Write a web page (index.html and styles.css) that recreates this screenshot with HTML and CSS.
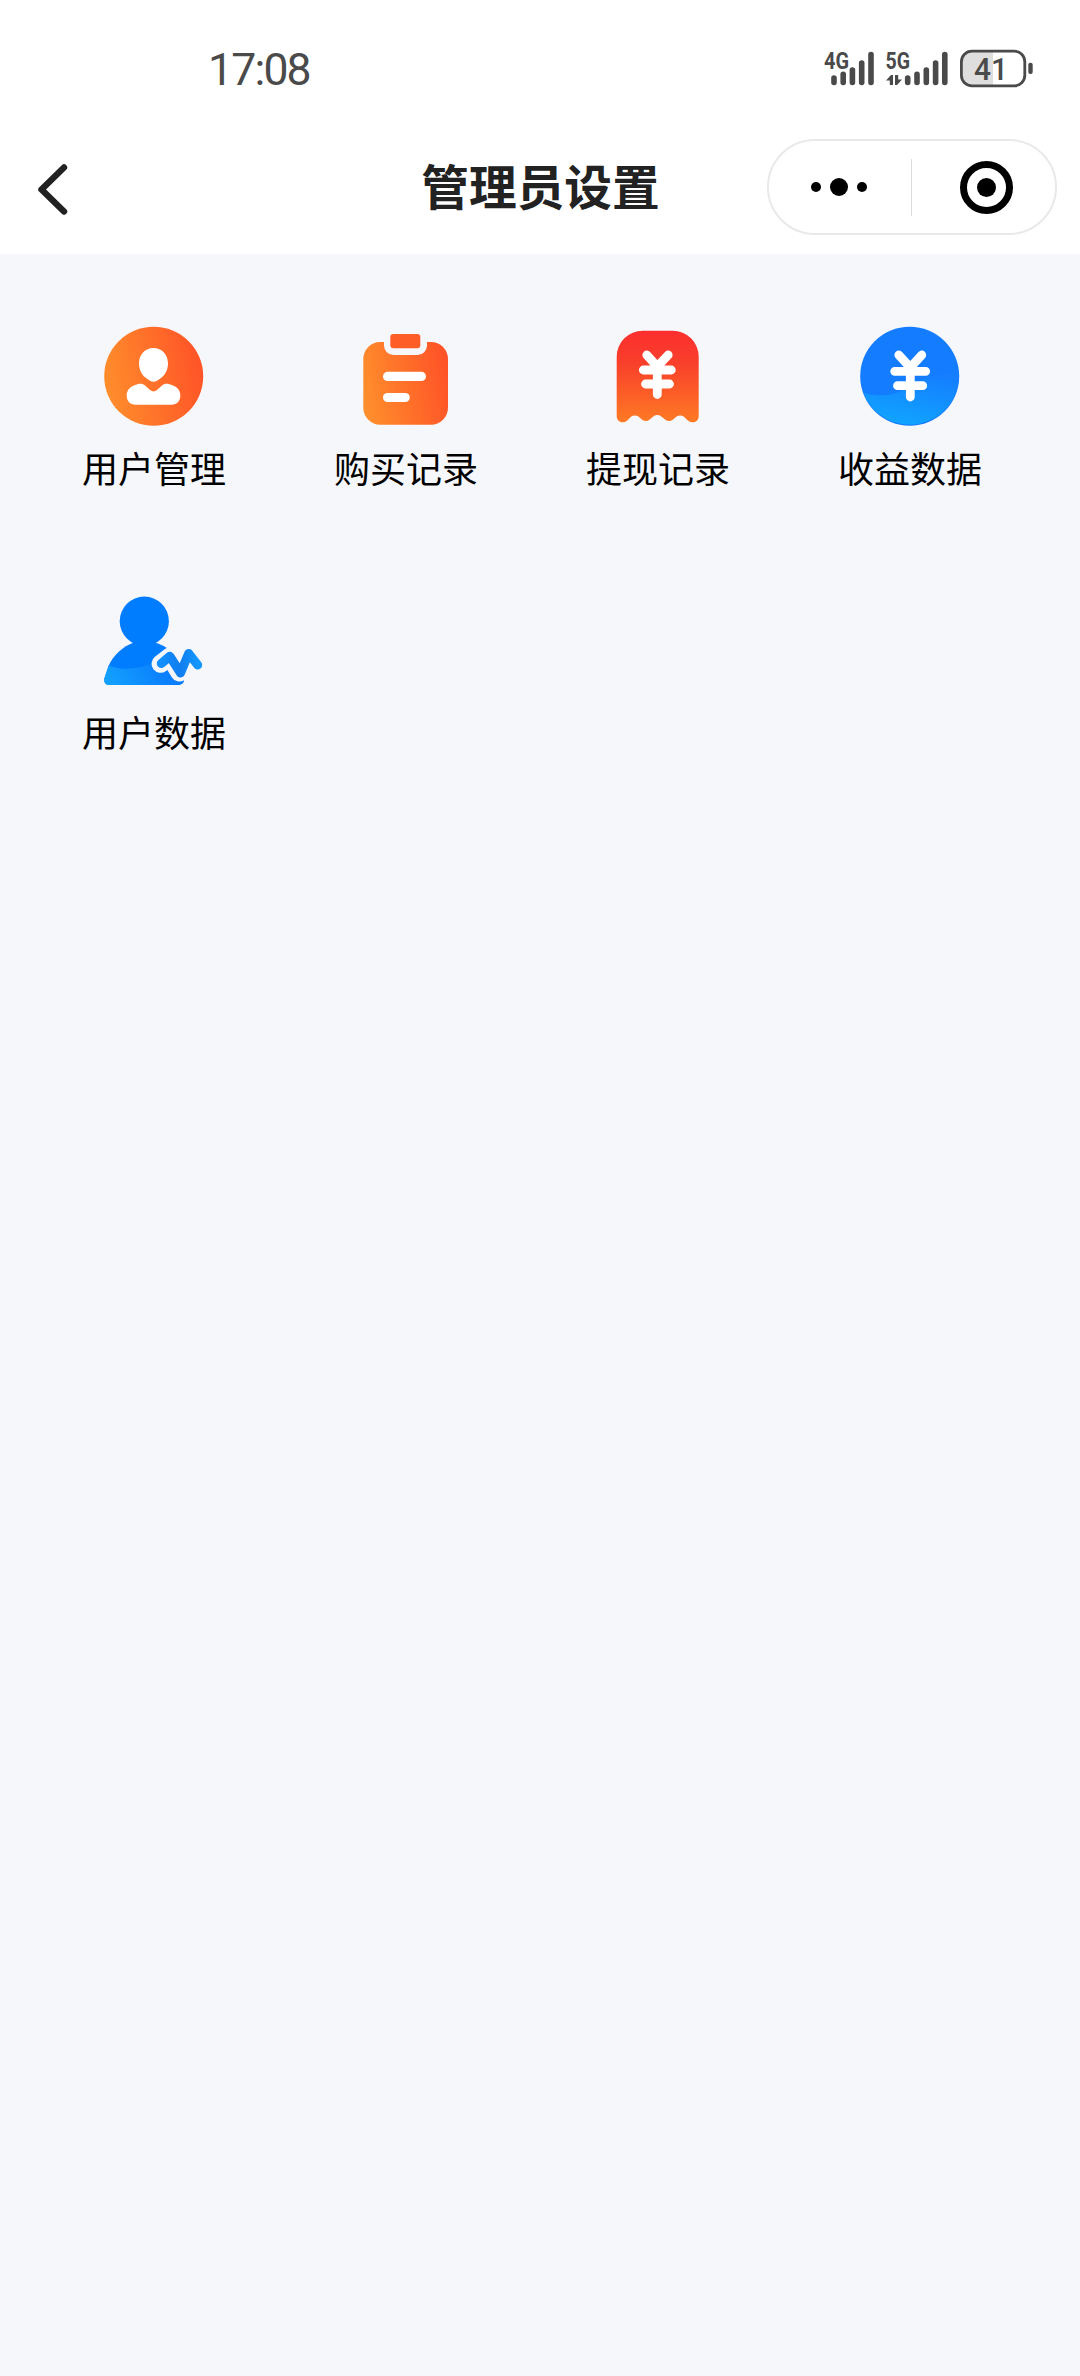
FILE: index.html
```html
<!DOCTYPE html>
<html lang="zh-CN">
<head>
    <meta charset="UTF-8">
    <meta name="viewport" content="width=device-width, initial-scale=1.0">
    <title>管理员设置</title>
    <link rel="stylesheet" href="styles.css">
</head>
<body>
    <header>
        <div class="status-bar">
            <span class="time">17:08</span>
            <svg class="status-icons" viewBox="0 0 216 46">
                <!-- 4G signal -->
                <text class="net" x="4" y="23.5" textLength="25" lengthAdjust="spacingAndGlyphs">4G</text>
                <path class="bars" d="M14 33v4.5M23.2 29.2v8.3M32.4 25v12.5M41.7 18v19.5M51 9.6v27.9"/>
                <!-- 5G signal -->
                <text class="net" x="65.5" y="23.5" textLength="24.5" lengthAdjust="spacingAndGlyphs">5G</text>
                <path class="bars" d="M87.7 33v4.5M97 29.2v8.3M106.3 25v12.5M115.6 18v19.5M124.8 9.6v27.9"/>
                <path class="traffic" d="M66 35.500l5-5.500h2v10h-3.200v-4.500zM75 30h3.200v4.500h3.800l-5 5.500H75z"/>
                <!-- battery -->
                <path class="charge" d="M152 6h21v35h-21a10 10 0 0 1-10-10V16a10 10 0 0 1 10-10z"/>
                <rect class="battery" x="141.4" y="6.2" width="63.4" height="34.6" rx="10.5"/>
                <rect class="nub" x="208.3" y="17.7" width="4.4" height="11.4" rx="2"/>
                <text class="percent" x="154" y="35" textLength="34" lengthAdjust="spacingAndGlyphs">41</text>
            </svg>
        </div>
        <nav class="nav-bar">
            <a class="back" href="#" aria-label="返回">
                <svg viewBox="0 0 32 50">
                    <path d="M27 3.5L4.500 25.500 27 47.500"/>
                </svg>
            </a>
            <h1>管理员设置</h1>
            <div class="capsule">
                <svg class="more" viewBox="0 0 56 18">
                    <circle cx="5" cy="9" r="5"/>
                    <circle cx="28" cy="9" r="9"/>
                    <circle cx="51" cy="9" r="5"/>
                </svg>
                <span class="divider"></span>
                <svg class="close" viewBox="0 0 53 53">
                    <circle class="ring" cx="26.5" cy="26.5" r="23"/>
                    <circle cx="26.5" cy="26.5" r="9.5"/>
                </svg>
            </div>
        </nav>
    </header>
    <main class="menu">
        <a class="item" href="#">
            <svg class="icon" viewBox="0 0 100 100">
                <defs>
                    <linearGradient id="orange" x1="0" y1="0.6" x2="1" y2="0.4">
                        <stop offset="0" stop-color="#ff8e2c"/>
                        <stop offset="1" stop-color="#ff5327"/>
                    </linearGradient>
                </defs>
                <circle cx="49.7" cy="50.3" r="49.5" fill="url(#orange)"/>
                <path fill="#fff" d="M49.5 22C58 22 64 28.500 64 37.500C64 44 61 49 57 52C54 54.300 52 55.800 49.500 55.800C47 55.800 45 54.300 42 52C38 49 35 44 35 37.500C35 28.500 41 22 49.500 22Z"/>
                <path fill="#fff" d="M30 59.500C35 57 38.500 57 41 59.500L46 64Q49.500 66.800 53 64L58 59.500C60.500 57 64 57 69 59.500C74 61.500 76.300 65 76.300 69.500C76.300 75 73 78.700 67.500 78.700H31.500C26 78.700 22.700 75 22.700 69.500C22.700 65 25 61.500 30 59.500Z"/>
            </svg>
            <span>用户管理</span>
        </a>
        <a class="item" href="#">
            <svg class="icon" viewBox="0 0 100 100">
                <path fill="url(#orange)" d="M24.300 16H28V19.500A9.500 9.500 0 0 0 37.500 29H61.500A9.500 9.500 0 0 0 71 19.500V16H75A17 17 0 0 1 92 33V81.700A17 17 0 0 1 75 98.700H24.300A17 17 0 0 1 7.300 81.700V33A17 17 0 0 1 24.300 16Z"/>
                <rect x="34.300" y="8" width="30" height="14.300" rx="3" fill="#ff5d28"/>
                <rect x="27" y="45.800" width="43" height="9.200" rx="4.600" fill="#fff"/>
                <rect x="27" y="67" width="26.800" height="9" rx="4.500" fill="#fff"/>
            </svg>
            <span>购买记录</span>
        </a>
        <a class="item" href="#">
            <svg class="icon" viewBox="0 0 100 100">
                <defs>
                    <linearGradient id="red" x1="0" y1="0" x2="0" y2="1">
                        <stop offset="0" stop-color="#fb2f2f"/>
                        <stop offset="0.350" stop-color="#f93f2b"/>
                        <stop offset="1" stop-color="#ff7a24"/>
                    </linearGradient>
                </defs>
                <path fill="url(#red)" d="M34.700 4.700H64.700A26 26 0 0 1 90.700 30.700V90C90.700 94 88 96.300 84.500 96.300C79 96.300 77.500 89.500 72.300 89.500C67 89.500 66 95 61 95C56 95 54.500 89 49.300 89C44 89 43 95 38 95C33 95 32 89.500 26.700 89.500C21.500 89.500 20 96.300 15 96.300C11.500 96.300 8.700 94 8.700 90V30.700A26 26 0 0 1 34.700 4.700Z"/>
                <path class="yen" d="M38.800 29L49.300 40.500L60.200 29M35.300 44H63.300M37.500 58H61.500M49.300 40.500V68.500"/>
            </svg>
            <span>提现记录</span>
        </a>
        <a class="item" href="#">
            <svg class="icon" viewBox="0 0 100 100">
                <defs>
                    <linearGradient id="wave" x1="0.300" y1="1" x2="0.700" y2="0">
                        <stop offset="0" stop-color="#10a5ff"/>
                        <stop offset="1" stop-color="#157fff"/>
                    </linearGradient>
                </defs>
                <circle cx="49.700" cy="50.300" r="49.500" fill="#147dff"/>
                <path fill="url(#wave)" d="M3.500 67C15 70 25 70 36 67C50 63 55 55 67 51.500C78 48.500 88 47.500 99.150 48.500A49.500 49.500 0 0 1 3.500 67Z"/>
                <path class="yen" d="M38.800 29L50.300 41.500L61.800 29M34.700 45.300H65.700M37.500 59.700H62.700M50.300 41.500V71"/>
            </svg>
            <span>收益数据</span>
        </a>
        <a class="item" href="#">
            <svg class="icon" viewBox="0 0 100 100">
                <defs>
                    <linearGradient id="lake" x1="0" y1="0.600" x2="1" y2="0.400">
                        <stop offset="0" stop-color="#12a0ff"/>
                        <stop offset="0.700" stop-color="#0c80fc"/>
                        <stop offset="1" stop-color="#0a78f5"/>
                    </linearGradient>
                    <linearGradient id="pulse" x1="0" y1="0" x2="1" y2="0">
                        <stop offset="0" stop-color="#1290ff"/>
                        <stop offset="0.500" stop-color="#117dee"/>
                        <stop offset="1" stop-color="#1296ff"/>
                    </linearGradient>
                </defs>
                <circle cx="40.300" cy="31.200" r="24.600" fill="#007cff"/>
                <path fill="#007cff" d="M28.700 53C20 56 9 65 4.500 76L0.500 88C-0.500 92 1.500 95 5 95H73C77 95 80 93 80 90V70L62 57.500C59 55.500 56 54 52 53L40 50Z"/>
                <path fill="url(#lake)" d="M4.800 75.500C16 80 28 79.500 40 76C50 73 55 70 60 66L80 80V90C80 93 77 95 73 95H5C1.500 95 -0.500 92 0.500 88Z"/>
                <path class="pulse-gap" d="M56.500 73.800L65.800 66.500L75.500 82.500L84.700 63.500L94 74.500"/>
                <path class="pulse" d="M57.300 73.500L65.800 66.300L76.500 83L84.700 63.500L93.700 75"/>
            </svg>
            <span>用户数据</span>
        </a>
    </main>
</body>
</html>
```

FILE: styles.css
```css
body {
    margin: 0;
    min-height: 2376px;
    background-color: #f6f7fb;
    font-family: Roboto, "Noto Sans CJK SC", sans-serif;
}
header {
    height: 254px;
    background-color: #fff;
}
svg {
    display: block;
    overflow: visible;
}

/* status bar */
.status-bar {
    display: flex;
    justify-content: space-between;
    height: 120px;
    padding: 45px 44px 0 208px;
    box-sizing: border-box;
}
.time {
    color: #4a4a4a;
    font-size: 44.5px;
    line-height: 51px;
    letter-spacing: -1.8px;
}
.status-icons {
    width: 216px;
    height: 46px;
    fill: #4a4a4a;
}
.net {
    font-size: 23px;
    font-weight: bold;
}
.bars {
    fill: none;
    stroke: #4a4a4a;
    stroke-width: 5.6;
    stroke-linecap: round;
}
.charge {
    fill: #dedede;
}
.battery {
    fill: none;
    stroke: #4a4a4a;
    stroke-width: 2.8;
}
.percent {
    font-size: 32px;
    font-weight: 500;
}

/* title bar */
.nav-bar {
    display: grid;
    grid-template-columns: 1fr auto 1fr;
    align-items: center;
    height: 134px;
    padding: 0 23px 0 37px;
}
.back svg {
    width: 32px;
    height: 50px;
    fill: none;
    stroke: #222;
    stroke-width: 6.4;
    stroke-linecap: round;
    stroke-linejoin: round;
}
.back {
    padding-top: 3px;
}
h1 {
    margin: 0 0 0 -13px;
    padding-top: 4px;
    color: #222;
    font-size: 47.7px;
    font-weight: bold;
    line-height: 70px;
}
.capsule {
    display: flex;
    align-items: center;
    justify-self: end;
    width: 290px;
    height: 96px;
    padding: 0 42px;
    border: 2px solid #e9e9e9;
    border-radius: 48px;
    box-sizing: border-box;
}
.more {
    width: 56px;
    height: 18px;
}
.divider {
    width: 2px;
    height: 57px;
    margin: 0 48px 0 44px;
    background-color: #dcdcdc;
}
.close {
    width: 53px;
    height: 53px;
}
.ring {
    fill: none;
    stroke: #000;
    stroke-width: 7;
}

/* menu */
.menu {
    display: grid;
    grid-template-columns: repeat(4, 252px);
    grid-auto-rows: 264px;
    padding: 72px 0 0 28px;
}
.item {
    display: flex;
    flex-direction: column;
    align-items: center;
    gap: 19px;
    color: #000;
    font-size: 36px;
    line-height: 52px;
    text-decoration: none;
}
.icon {
    width: 100px;
    height: 100px;
}
.yen {
    fill: none;
    stroke: #fff;
    stroke-width: 8.8;
    stroke-linecap: round;
    stroke-linejoin: round;
}
.pulse-gap {
    fill: none;
    stroke: #f6f7fb;
    stroke-width: 18;
    stroke-linecap: round;
    stroke-linejoin: round;
}
.pulse {
    fill: none;
    stroke: url(#pulse);
    stroke-width: 9;
    stroke-linecap: round;
    stroke-linejoin: round;
}
```
